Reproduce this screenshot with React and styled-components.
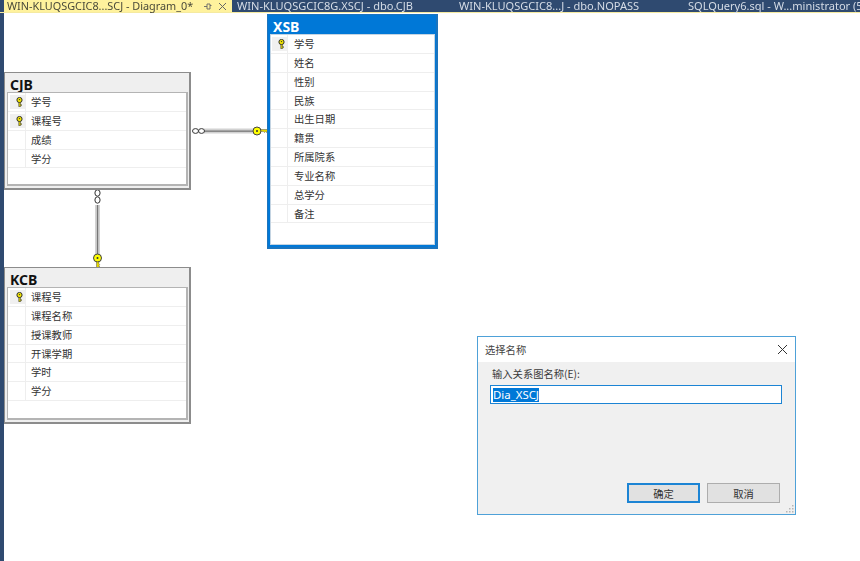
import React from "react";
import styled, { createGlobalStyle } from "styled-components";

const cjk = `"Noto Sans CJK SC", "Noto Sans", sans-serif`;

const Global = createGlobalStyle`
  html, body {
    margin: 0;
    padding: 0;
    background: #fff;
    overflow: hidden;
  }
  * {
    box-sizing: border-box;
  }
`;

/* ===== SHELL ===== */
const Page = styled.div`
  width: 860px;
  height: 561px;
  display: flex;
  flex-direction: column;
  font-family: ${cjk};
  color: #333;
  filter: blur(0.3px);
`;

const TabBar = styled.div`
  height: 13px;
  flex: none;
  display: flex;
  background: #2f4a70;
  border-bottom: 1px solid #f5eaa0;
  padding-left: 4px;
`;

const Tab = styled.div`
  width: ${(p) => p.$width}px;
  flex: none;
  display: flex;
  align-items: center;
  gap: 8px;
  padding-left: ${(p) => p.$pad ?? 3}px;
  font-family: "Noto Sans", sans-serif;
  font-size: ${(p) => (p.$active ? 10.85 : 11.05)}px;
  line-height: 12px;
  white-space: nowrap;
  background: ${(p) => (p.$active ? "#fff29d" : "transparent")};
  color: ${(p) => (p.$active ? "#4a4a3a" : "#d5dce6")};
`;

const Body = styled.div`
  flex: 1;
  display: flex;
`;

const Rail = styled.div`
  width: 4px;
  flex: none;
  background: #2f4a70;
`;

const Canvas = styled.div`
  flex: 1;
  position: relative;
  background: #fff;
`;

/* ===== DIAGRAM TABLES ===== */
const TableBox = styled.div`
  position: absolute;
  left: ${(p) => p.$x}px;
  top: ${(p) => p.$y}px;
  width: ${(p) => p.$w}px;
  height: ${(p) => p.$h}px;
  display: flex;
  flex-direction: column;
  padding: 0 1px 2px 2px;
  background: ${(p) => (p.$selected ? "#0078d7" : "#efefef")};
  border: ${(p) => (p.$selected ? "1px solid #1c74bd" : "1px solid #8c8c8c")};
  border-bottom-width: 2px;
  border-right-width: 2px;
`;

const TableTitle = styled.div`
  height: 19px;
  flex: none;
  padding: 3px 0 0 3px;
  font-family: "Noto Sans", sans-serif;
  font-weight: 700;
  font-size: 14px;
  line-height: 17px;
  color: ${(p) => (p.$selected ? "#fff" : "#111")};
`;

const Grid = styled.div`
  flex: 1;
  background: #fff;
  border: 1px solid ${(p) => (p.$selected ? "#c4d4e2" : "#b4b4b4")};
  border-right-width: ${(p) => (p.$selected ? 1 : 2)}px;
  border-bottom-width: ${(p) => (p.$selected ? 1 : 2)}px;
`;

const Row = styled.div`
  height: 18.85px;
  display: flex;
  border-bottom: 1px solid #eee;
`;

const KeyCell = styled.div`
  width: ${(p) => (p.$selected ? 17 : 18)}px;
  flex: none;
  display: flex;
  align-items: center;
  justify-content: flex-end;
  border-right: 1px solid #eee;
`;

const KeyBack = styled.div`
  width: 15px;
  height: 14px;
  display: flex;
  align-items: center;
  padding-left: 6px;
  background: ${(p) => (p.$on ? "#f0f0f0" : "transparent")};
`;

const RowText = styled.div`
  padding-left: ${(p) => (p.$selected ? 6 : 5)}px;
  font-size: 10.3px;
  line-height: 18px;
  color: #333;
`;

const KeyIcon = () => (
  <svg width="7" height="10" viewBox="0 0 7 10">
    <circle cx="3.5" cy="3" r="2.6" fill="#f5e800" stroke="#333" strokeWidth="1" />
    <circle cx="3.5" cy="2.6" r="0.7" fill="#333" />
    <path d="M2.800 5.500v4.200h1.600V8.700h1V7.600h-1V5.500z" fill="#e6d800" stroke="#333" strokeWidth="0.6" />
  </svg>
);

const Table = ({ name, x, y, w, h, selected, rows }) => (
  <TableBox $x={x} $y={y} $w={w} $h={h} $selected={selected}>
    <TableTitle $selected={selected}>{name}</TableTitle>
    <Grid $selected={selected}>
      {rows.map((r) => (
        <Row key={r.label}>
          <KeyCell $selected={selected}>
            <KeyBack $on={r.key}>{r.key && <KeyIcon />}</KeyBack>
          </KeyCell>
          <RowText $selected={selected}>{r.label}</RowText>
        </Row>
      ))}
    </Grid>
  </TableBox>
);

/* ===== CONNECTORS ===== */
const Wires = styled.svg`
  position: absolute;
  left: 0;
  top: 0;
  width: 856px;
  height: 548px;
  pointer-events: none;
`;

const Connectors = () => (
  <Wires viewBox="0 0 856 548">
    {/* CJB -> XSB */}
    <rect x="200" y="115.500" width="50" height="5" fill="#d2d2d2" />
    <rect x="200" y="117.500" width="50" height="1.300" fill="#777" />
    <ellipse cx="191.500" cy="118" rx="3" ry="2.400" fill="#fff" stroke="#333" />
    <ellipse cx="197.500" cy="118" rx="3" ry="2.400" fill="#fff" stroke="#333" />
    <circle cx="253" cy="118" r="4" fill="#ffff00" stroke="#444" />
    <circle cx="253" cy="118" r="1" fill="#333" />
    <path d="M257 116.500h6.500v1.300l-1 1.800-1-1-1 1-1-1h-2.500z" fill="#e6d800" stroke="#555" strokeWidth="0.5" />
    {/* CJB -> KCB */}
    <rect x="91" y="192" width="5" height="50" fill="#d2d2d2" />
    <rect x="92.900" y="192" width="1.300" height="50" fill="#777" />
    <ellipse cx="93.500" cy="180" rx="2.600" ry="3.200" fill="#fff" stroke="#333" />
    <ellipse cx="93.500" cy="187" rx="2.600" ry="3.200" fill="#fff" stroke="#333" />
    <circle cx="93.500" cy="245" r="4" fill="#ffff00" stroke="#444" />
    <circle cx="93.500" cy="245" r="1" fill="#333" />
    <path d="M92.500 249v5.500h1.500l1.800-.7-1-1 1-1-1-1 .2-1.800z" fill="#e6d800" stroke="#555" strokeWidth="0.5" />
  </Wires>
);

/* ===== DIALOG ===== */
const Dialog = styled.div`
  position: absolute;
  left: 473px;
  top: 323px;
  width: 319px;
  height: 179px;
  display: flex;
  flex-direction: column;
  background: #f0f0f0;
  border: 1px solid #4ea1d8;
  font-size: 10.3px;
`;

const DialogHead = styled.div`
  height: 25px;
  flex: none;
  display: flex;
  align-items: center;
  justify-content: space-between;
  padding: 0 7px;
  background: #fff;
  color: #444;
`;

const DialogBody = styled.div`
  flex: 1;
  display: flex;
  flex-direction: column;
  position: relative;
  padding: 5px 15px 11px 12px;
`;

const FieldLabel = styled.div`
  height: 14px;
  padding-left: 2px;
  line-height: 14px;
  font-size: 10.3px;
  color: #3a3a3a;
`;

const NameInput = styled.div`
  margin: 4px -2px 0 0;
  height: 19px;
  display: flex;
  align-items: center;
  padding-left: 2px;
  background: #fff;
  border: 1px solid #1c84d4;
`;

const Selected = styled.span`
  background: #0078d7;
  color: #fff;
  font-family: "Noto Sans", sans-serif;
  font-size: 11.4px;
  line-height: 14px;
  height: 14px;
`;

const Buttons = styled.div`
  margin-top: auto;
  display: flex;
  justify-content: flex-end;
  gap: 7px;
`;

const Button = styled.div`
  width: 73px;
  height: 20px;
  display: flex;
  align-items: center;
  justify-content: center;
  background: #e1e1e1;
  border: ${(p) => (p.$primary ? "2px solid #1c84d4" : "1px solid #adadad")};
  color: #333;
  font-size: 10.3px;
`;

const Grip = styled.svg`
  position: absolute;
  right: 1px;
  bottom: 1px;
`;

const tables = [
  {
    name: "XSB",
    x: 263,
    y: 1,
    w: 171,
    h: 235,
    selected: true,
    rows: ["学号", "姓名", "性别", "民族", "出生日期", "籍贯", "所属院系", "专业名称", "总学分", "备注"],
  },
  { name: "CJB", x: 0, y: 59, w: 187, h: 118, rows: ["学号", "课程号", "成绩", "学分"], keys: 2 },
  {
    name: "KCB",
    x: 0,
    y: 254,
    w: 187,
    h: 157,
    rows: ["课程号", "课程名称", "授课教师", "开课学期", "学时", "学分"],
  },
];

const App = () => (
  <Page>
    <Global />
    <TabBar>
      <Tab $active $width={228}>
        <span>WIN-KLUQSGCIC8...SCJ - Diagram_0*</span>
        <svg width="26" height="9" viewBox="0 0 26 9" style={{ flex: "none" }}>
          <path d="M3 4.500h3M6 2v5h3V2zM9 3.500h1.500" fill="none" stroke="#666" strokeWidth="0.9" />
          <path d="M18 1l7 7M25 1l-7 7" stroke="#666" strokeWidth="1" />
        </svg>
      </Tab>
      <Tab $width={224} $pad={5}>WIN-KLUQSGCIC8G.XSCJ - dbo.CJB</Tab>
      <Tab $width={228}>WIN-KLUQSGCIC8...J - dbo.NOPASS</Tab>
      <Tab $width={172} $pad={4}>SQLQuery6.sql - W...ministrator (5</Tab>
    </TabBar>
    <Body>
      <Rail />
      <Canvas>
        <Connectors />
        {tables.map((t) => (
          <Table
            key={t.name}
            {...t}
            rows={t.rows.map((label, i) => ({ label, key: i < (t.keys ?? 1) }))}
          />
        ))}
        <Dialog>
          <DialogHead>
            <span>选择名称</span>
            <svg width="11" height="11" viewBox="0 0 11 11">
              <path d="M1 1l9 9M10 1l-9 9" stroke="#333" strokeWidth="1" />
            </svg>
          </DialogHead>
          <DialogBody>
            <FieldLabel>输入关系图名称(E):</FieldLabel>
            <NameInput>
              <Selected>Dia_XSCJ</Selected>
            </NameInput>
            <Buttons>
              <Button $primary>确定</Button>
              <Button>取消</Button>
            </Buttons>
            <Grip width="9" height="9" viewBox="0 0 9 9">
              <path d="M7 1h1.500v1.500H7zM4 4h1.500v1.500H4zM7 4h1.500v1.500H7zM1 7h1.500v1.500H1zM4 7h1.500v1.500H4zM7 7h1.500v1.500H7z" fill="#b5b5b5" />
            </Grip>
          </DialogBody>
        </Dialog>
      </Canvas>
    </Body>
  </Page>
);

export default App;
